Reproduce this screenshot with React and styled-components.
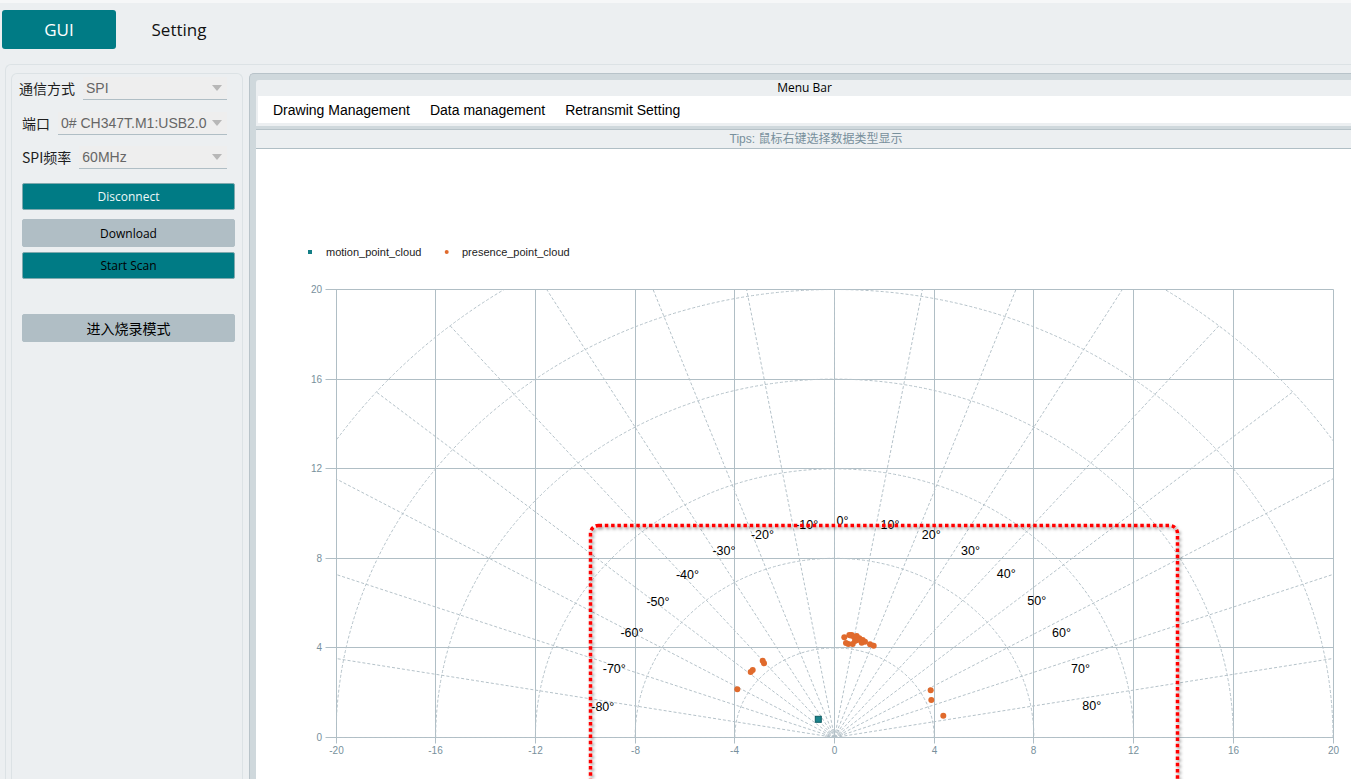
import React from 'react';
import styled, { createGlobalStyle } from 'styled-components';

const GlobalStyle = createGlobalStyle`
  html, body { margin: 0; padding: 0; height: 100%; overflow: hidden; background: #eceff1; }
  #root { height: 100%; }
  * { box-sizing: border-box; }
`;

const Page = styled.div`
  height: 100vh;
  display: flex;
  flex-direction: column;
  background: #eceff1;
  border-top: 3px solid #f6f7f8;
  font-family: "Liberation Sans", Arial, sans-serif;
  overflow: hidden;
`;

const TopBar = styled.div`
  flex: none;
  height: 61px;
  display: flex;
  align-items: flex-start;
  gap: 6px;
  padding: 7px 0 0 2px;
`;

const Tab = styled.button`
  width: 114px;
  height: 39px;
  border: none;
  border-radius: 3px;
  padding: 0;
  background: ${p => (p.$active ? '#007b85' : 'transparent')};
  color: ${p => (p.$active ? '#ffffff' : '#111111')};
  font-family: "Open Sans", "Noto Sans", sans-serif;
  font-size: 17px;
`;

const Workspace = styled.div`
  flex: 1;
  min-height: 0;
  margin-left: 5px;
  display: flex;
  gap: 6px;
  padding: 8px 0 0 5px;
  border-top: 1px solid #dce2e5;
  border-left: 1px solid #dce2e5;
  border-top-left-radius: 6px;
`;

const Sidebar = styled.div`
  flex: none;
  width: 232px;
  display: flex;
  flex-direction: column;
  padding-top: 3px;
  border: 1px solid #dce2e5;
  border-bottom: none;
  border-radius: 6px 6px 0 0;
  background: #eceff1;
`;

const FieldRow = styled.div`
  display: flex;
  height: 23px;
  margin-top: ${p => p.$mt}px;
  padding-left: ${p => p.$pl}px;
  padding-right: 15px;
`;

const FieldLabel = styled.span`
  line-height: 23px;
  margin-right: 8px;
  font-family: "Noto Sans CJK SC", sans-serif;
  font-size: 14px;
  color: #1e1e1e;
  white-space: nowrap;
`;

const SelectBox = styled.div`
  flex: 1;
  min-width: 0;
  display: flex;
  align-items: center;
  justify-content: space-between;
  padding: 0 5px 0 3px;
  background: #eeeeee;
  border-bottom: 1px solid #b0bec5;
  font-family: "Liberation Sans", Arial, sans-serif;
  font-size: 14px;
  color: #666666;
  white-space: nowrap;
  overflow: hidden;
`;

const Caret = styled.span`
  flex: none;
  width: 0;
  height: 0;
  border-left: 5px solid transparent;
  border-right: 5px solid transparent;
  border-top: 6px solid #b7b7b7;
`;

const ActionButton = styled.button`
  display: block;
  margin: ${p => p.$mt}px 7px 0 10px;
  height: ${p => p.$h}px;
  padding: 0;
  border-radius: 2px;
  border: 1px solid ${p => (p.$variant === 'teal' ? '#7fa9ae' : '#b0bec5')};
  background: ${p => (p.$variant === 'teal' ? '#007b85' : '#b0bec5')};
  color: ${p => p.$color};
  font-family: ${p => (p.$cjk ? '"Noto Sans CJK SC", sans-serif' : '"Open Sans", "Noto Sans", sans-serif')};
  font-size: ${p => (p.$cjk ? 14 : 12)}px;
`;

const Main = styled.div`
  flex: 1;
  min-width: 0;
  display: flex;
  flex-direction: column;
  background: #cfd8dc;
  border-top: 1px solid #b8c3c9;
  border-left: 1px solid #b8c3c9;
  border-top-left-radius: 5px;
  padding: 6px 0 0 6px;
`;

const MenuPanel = styled.div`
  flex: none;
  background: #eceff1;
  border-top-left-radius: 3px;
  padding: 0 0 3px 2px;
`;

const MenuTitle = styled.div`
  height: 16px;
  line-height: 16px;
  text-align: center;
  font-family: "Open Sans", "Noto Sans", sans-serif;
  font-size: 12px;
  color: #000;
`;

const MenuStrip = styled.div`
  height: 27px;
  display: flex;
  align-items: center;
  gap: 20px;
  padding-left: 15px;
  background: #ffffff;
`;

const MenuItem = styled.span`
  font-family: "Liberation Sans", Arial, sans-serif;
  font-size: 14px;
  color: #000;
`;

const TipsBar = styled.div`
  flex: none;
  height: 20px;
  margin-top: 3px;
  padding-left: 25px;
  border-top: 1px solid #b6c2c8;
  border-bottom: 1px solid #b0bec5;
  background: #eceff1;
  text-align: center;
  line-height: 18px;
  font-family: "Liberation Sans", "Noto Sans CJK SC", sans-serif;
  font-size: 12px;
  color: #78909c;
`;

const ChartArea = styled.div`
  flex: 1;
  min-height: 0;
  position: relative;
  background: #ffffff;
  overflow: hidden;
`;

const ChartSvg = styled.svg`
  display: block;
  font-family: "Liberation Sans", Arial, sans-serif;
`;

/* chart geometry (px relative to chart area) */
const OX = 256;
const OY = 149;
const X0 = 578;
const Y0 = 588;
const UX = 24.925;
const UY = 22.4;
const gx = v => Math.round(X0 + v * UX) + 0.5;
const gy = v => Math.round(Y0 - v * UY) + 0.5;
const CX = gx(0);
const CY = gy(0);

const xTicks = [-20, -16, -12, -8, -4, 0, 4, 8, 12, 16, 20];
const yTicks = [0, 4, 8, 12, 16, 20];
const radii = [0.2, 0.35, 4, 8, 12, 16, 20, 24];
const angles = [];
for (let a = -90; a <= 90; a += 10) angles.push(a);

const degreeLabels = [
  ['-80°', 602.8, 706.5], ['-70°', 614.3, 669.3], ['-60°', 632, 633.3], ['-50°', 658, 601.5],
  ['-40°', 687.5, 575], ['-30°', 724, 550.7], ['-20°', 762.5, 535], ['-10°', 806.7, 525],
  ['0°', 842.5, 520.5], ['10°', 890, 525], ['20°', 931.3, 534.5], ['30°', 970.5, 551],
  ['40°', 1006.3, 574], ['50°', 1036.7, 600.7], ['60°', 1061.5, 633.3], ['70°', 1080.5, 669.3],
  ['80°', 1091.7, 706],
];

const presence = [
  [844.3, 637.3], [849.3, 635], [851.7, 635], [856.7, 636], [859.3, 638.3], [862.7, 640],
  [865, 641.7], [861.7, 642.7], [848.3, 644], [852.7, 644], [870, 644.3], [873.7, 645.7],
  [850.7, 635.5], [854, 637], [857.5, 640], [846, 643], [855, 641],
  [762.7, 660.7], [764, 663.3], [752.7, 670], [750.7, 672], [737.3, 689.3],
  [930.7, 690.3], [931.3, 700], [943.3, 715.7],
];

const PolarChart = () => (
  <ChartSvg width="1095" height="630">
    <defs>
      <clipPath id="plotClip">
        <rect x={gx(-20)} y={gy(20)} width={gx(20) - gx(-20)} height={gy(0) - gy(20)} />
      </clipPath>
      <filter id="annShadow" x="-5%" y="-5%" width="110%" height="110%">
        <feDropShadow dx="1.5" dy="2" stdDeviation="1.8" floodColor="#000" floodOpacity="0.4" />
      </filter>
    </defs>

    {/* legend */}
    <rect x="52" y="101" width="4" height="4" fill="#137e86" />
    <text x="70" y="107" fontSize="11" fill="#222">motion_point_cloud</text>
    <circle cx="190.7" cy="103" r="2" fill="#e06a2c" />
    <text x="206" y="107" fontSize="11" fill="#222">presence_point_cloud</text>

    {/* rectangular grid */}
    <g stroke="#b0bec5" strokeWidth="1">
      {xTicks.map(v => (
        <line key={`vx${v}`} x1={gx(v)} y1={gy(20)} x2={gx(v)} y2={gy(0) + 6} />
      ))}
      {yTicks.map(v => (
        <line key={`hy${v}`} x1={gx(-20) - 11} y1={gy(v)} x2={gx(20)} y2={gy(v)} />
      ))}
    </g>

    {/* polar grid */}
    <g clipPath="url(#plotClip)" stroke="#b5c2c9" strokeWidth="1" strokeDasharray="3 2" fill="none">
      {radii.map(r => (
        <path
          key={`arc${r}`}
          d={`M ${CX - r * UX} ${CY} A ${r * UX} ${r * UY} 0 0 1 ${CX + r * UX} ${CY}`}
        />
      ))}
      {angles.map(a => {
        const t = (a * Math.PI) / 180;
        return (
          <line
            key={`rad${a}`}
            x1={CX}
            y1={CY}
            x2={CX + 24 * Math.sin(t) * UX}
            y2={CY - 24 * Math.cos(t) * UY}
          />
        );
      })}
    </g>

    {/* axis labels */}
    <g fontSize="10" fill="#78909c">
      {yTicks.map(v => (
        <text key={`yl${v}`} x={66} y={gy(v) + 3.5} textAnchor="end">{v}</text>
      ))}
      {xTicks.map(v => (
        <text key={`xl${v}`} x={gx(v)} y={605} textAnchor="middle">{v}</text>
      ))}
    </g>

    {/* data points */}
    <g fill="#e06a2c">
      {presence.map(([x, y], i) => (
        <circle key={`p${i}`} cx={x - OX} cy={y - OY} r="3" />
      ))}
    </g>
    <rect x={818.3 - OX - 3} y={719.3 - OY - 3} width="6" height="6" fill="#1b848c" stroke="#0e5d63" strokeWidth="1" />

    {/* degree labels */}
    <g fontSize="12.5" fill="#000" textAnchor="middle">
      {degreeLabels.map(([t, x, y]) => (
        <text key={t} x={x - OX} y={y - OY + 4}>{t}</text>
      ))}
    </g>

    {/* red annotation frame */}
    <rect
      x={590.5 - OX}
      y={525.5 - OY}
      width={587}
      height={420}
      rx="8"
      fill="none"
      stroke="#ff0000"
      strokeWidth="3.5"
      strokeDasharray="3.5 2.8"
      filter="url(#annShadow)"
    />
  </ChartSvg>
);

export default function App() {
  return (
    <>
      <GlobalStyle />
      <Page>
        <TopBar>
          <Tab $active>GUI</Tab>
          <Tab>Setting</Tab>
        </TopBar>
        <Workspace>
          <Sidebar>
            <FieldRow $mt={0} $pl={7}>
              <FieldLabel>通信方式</FieldLabel>
              <SelectBox>SPI<Caret /></SelectBox>
            </FieldRow>
            <FieldRow $mt={12} $pl={10}>
              <FieldLabel>端口</FieldLabel>
              <SelectBox>0# CH347T.M1:USB2.0<Caret /></SelectBox>
            </FieldRow>
            <FieldRow $mt={11} $pl={10}>
              <FieldLabel>SPI频率</FieldLabel>
              <SelectBox>60MHz<Caret /></SelectBox>
            </FieldRow>
            <ActionButton $variant="teal" $mt={14} $h={27} $color="#eef8f8">Disconnect</ActionButton>
            <ActionButton $variant="gray" $mt={9} $h={28} $color="#000">Download</ActionButton>
            <ActionButton $variant="teal" $mt={5} $h={27} $color="#000">Start Scan</ActionButton>
            <ActionButton $variant="gray" $mt={35} $h={28} $color="#000" $cjk>进入烧录模式</ActionButton>
          </Sidebar>
          <Main>
            <MenuPanel>
              <MenuTitle>Menu Bar</MenuTitle>
              <MenuStrip>
                <MenuItem>Drawing Management</MenuItem>
                <MenuItem>Data management</MenuItem>
                <MenuItem>Retransmit Setting</MenuItem>
              </MenuStrip>
            </MenuPanel>
            <TipsBar>Tips: 鼠标右键选择数据类型显示</TipsBar>
            <ChartArea>
              <PolarChart />
            </ChartArea>
          </Main>
        </Workspace>
      </Page>
    </>
  );
}
